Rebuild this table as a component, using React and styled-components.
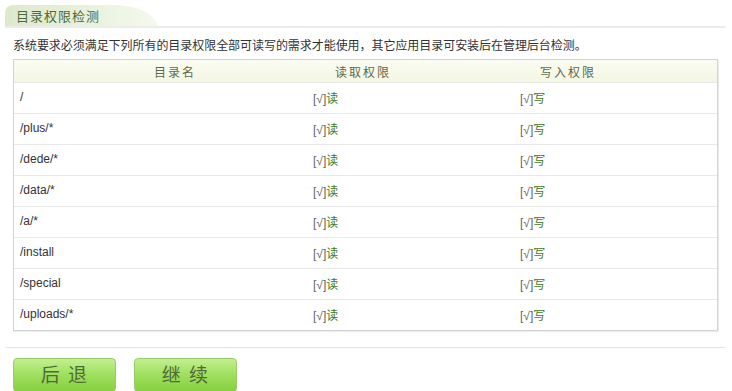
import React from "react";
import styled, { createGlobalStyle } from "styled-components";

const Global = createGlobalStyle`
  html, body { margin: 0; padding: 0; background: #fff; }
  body { font-family: "Liberation Sans", "Noto Sans CJK SC", sans-serif; font-size: 12px; color: #333; }
`;

const Page = styled.div`
  width: 720px;
  padding: 5px 7px 0 5px;
`;

const TitleBar = styled.div`
  display: flex;
  border-bottom: 2px solid #ececec;
  height: 21px;
`;

const TitleTab = styled.div`
  width: 152px;
  height: 21px;
  padding-left: 11px;
  box-sizing: border-box;
  display: flex;
  align-items: center;
  font-family: "Noto Sans CJK SC", sans-serif;
  font-size: 13px;
  letter-spacing: 1px;
  color: #4d6a3b;
  background: linear-gradient(to right, #dde9cc 0%, #e9f2dd 55%, #f4f9ee 100%);
  border-radius: 8px 44px 0 0 / 8px 21px 0 0;
`;

const Desc = styled.p`
  margin: 7px 0 0 8px;
  line-height: 20px;
  font-family: "Noto Sans CJK SC", sans-serif;
  font-size: 12px;
  color: #333;
  letter-spacing: -0.05px;
`;

const Table = styled.div`
  margin: 4px 0 0 8px;
  width: 705px;
  box-sizing: border-box;
  border: 1px solid #d3d3d3;
  box-shadow: 1px 1px 0 #ececec;
`;

const Row = styled.div`
  display: grid;
  grid-template-columns: 293px 207px 1fr;
  height: ${(p) => (p.$head ? "22px" : "30px")};
  align-items: center;
  border-top: ${(p) => (p.$head ? "none" : "1px solid #e9e9e9")};
  background: ${(p) =>
    p.$head ? "linear-gradient(to bottom, #fbfcf3, #f3f7e2)" : "#fff"};
`;

const HeadCell = styled.div`
  padding-left: ${(p) => p.$pad}px;
  font-family: "Noto Sans CJK SC", sans-serif;
  font-size: 12px;
  letter-spacing: 2px;
  color: #5d6a4f;
`;

const Cell = styled.div`
  padding-left: 6px;
  margin-top: -2px;
  font-family: "Liberation Sans", "Noto Sans CJK SC", sans-serif;
  font-size: 12px;
  color: ${(p) => (p.$ok ? "#3e7a22" : "#333")};
`;

const Mark = styled.span`
  color: #666;
`;

const Rule = styled.div`
  margin-top: 16px;
  height: 0;
  border-top: 1px solid #e3e3e3;
`;

const Buttons = styled.div`
  display: flex;
  gap: 18px;
  margin: 10px 0 0 8px;
`;

const Button = styled.button`
  width: 103px;
  height: 34px;
  border: 1px solid #9acb6a;
  border-radius: 4px;
  background: linear-gradient(to bottom, #c2f08e 0%, #a2e063 45%, #86d03f 100%);
  font-family: "Noto Sans CJK SC", sans-serif;
  font-size: 19px;
  line-height: 30px;
  letter-spacing: 1px;
  word-spacing: 2px;
  color: #4e6b36;
  padding: 0 0 2px;
  cursor: pointer;
`;

const dirs = ["/", "/plus/*", "/dede/*", "/data/*", "/a/*", "/install", "/special", "/uploads/*"];

export default function App() {
  return (
    <>
      <Global />
      <Page>
        <TitleBar>
          <TitleTab>目录权限检测</TitleTab>
        </TitleBar>
        <Desc>系统要求必须满足下列所有的目录权限全部可读写的需求才能使用，其它应用目录可安装后在管理后台检测。</Desc>
        <Table>
          <Row $head>
            <HeadCell $pad={140}>目录名</HeadCell>
            <HeadCell $pad={28}>读取权限</HeadCell>
            <HeadCell $pad={26}>写入权限</HeadCell>
          </Row>
          {dirs.map((d) => (
            <Row key={d}>
              <Cell>{d}</Cell>
              <Cell $ok><Mark>[√]</Mark>读</Cell>
              <Cell $ok><Mark>[√]</Mark>写</Cell>
            </Row>
          ))}
        </Table>
        <Rule />
        <Buttons>
          <Button>后&nbsp;退</Button>
          <Button>继&nbsp;续</Button>
        </Buttons>
      </Page>
    </>
  );
}
